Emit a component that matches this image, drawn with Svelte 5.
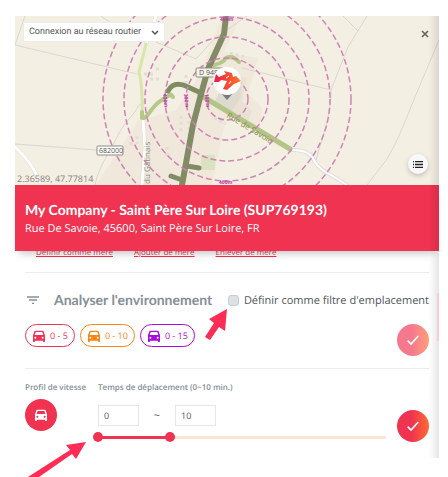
<script lang="ts">
	interface Chip {
		label: string;
		tone: string;
	}

	const chips: Chip[] = [
		{ label: '0 - 5', tone: 'red' },
		{ label: '0 - 10', tone: 'orange' },
		{ label: '0 - 15', tone: 'purple' }
	];

	const links = ['Définir comme mère', 'Ajouter de mère', 'Enlever de mère'];
	const rings = [21, 41, 62, 82, 103, 124];
	const maxTime = 40;

	let from = $state(0);
	let to = $state(10);
	let asFilter = $state(false);
</script>

{#snippet car()}
	<svg class="car" viewBox="0 0 24 24" aria-hidden="true">
		<path d="M18.9 5c-.2-.6-.8-1-1.4-1h-11c-.7 0-1.200.4-1.400 1L3 11v9c0 .6.4 1 1 1h1c.6 0 1-.4 1-1v-1h12v1c0 .6.4 1 1 1h1c.6 0 1-.4 1-1v-9l-2.100-6zM6.500 16a1.500 1.500 0 1 1 0-3 1.500 1.500 0 0 1 0 3zm11 0a1.500 1.500 0 1 1 0-3 1.500 1.500 0 0 1 0 3zM5.500 10.500l1.500-4.500h10l1.500 4.500H5.500z" />
	</svg>
{/snippet}

{#snippet check()}
	<svg width="16" height="16" viewBox="0 0 24 24" aria-hidden="true">
		<path d="M4 13l5 5L20 6" fill="none" stroke="#fff" stroke-width="2.500" />
	</svg>
{/snippet}

<main class="page">
	<div class="panel">
		<section class="map">
			<svg class="map-canvas" viewBox="15 16 424 169" preserveAspectRatio="xMidYMid slice" role="img" aria-label="Carte">
				<rect x="-200" y="16" width="900" height="169" fill="#f4efe3" />
				<path d="M200 75L222 16H241L224 52L258 58L248 94L262 108L260 128L226 116L212 185H96L118 152L138 121L176 110Z" fill="#efe8db" />
				<path d="M225 72l22 6l-5 23l10 10l-5 12l-30-16z" fill="#e8e1d4" />
				<path d="M226 78l15 5v14l-9 14l-18-8z" fill="#dedad0" />
				<path d="M201 155h14v15h-14z" fill="#dbe2c0" />
				<g fill="none" stroke="#d9d7cf">
					<path d="M25 16L15 45L137 74M101 16l10 7l85 36L215 38L247 16M15 144l82 6M95 185c4-20 15-32 24-52c8-14 17-20 19-27M138 106l8-6" />
					<path d="M242 68l89 22L348 47L367 16M343 16l15 15M331 90c0 25-8 45-15 70M439 40L415 97c-10 25-18 45-28 62L367 185" />
				</g>
				<g fill="none" stroke="#e3ded4" stroke-width="3">
					<path d="M144 74h10M156 69h5M150 79h12M167 147v10M137 136v8M132 143l-6 4M181 116v16M189 121v18M230 53l14 4M202 65v12M186 75v12M214 118l12 6" stroke-dasharray="3 3" />
				</g>
				<g fill="none" stroke-linecap="round">
					<path d="M15 147q17 15 25 35M156 16L146 44M143 118l2 30l-3 37" stroke="#dfddd7" stroke-width="4" />
					<path d="M15 147q17 15 25 35M156 16L146 44M143 118l2 30l-3 37" stroke="#fff" stroke-width="3" />
					<path d="M292 150c13 0 19 3 23 12q5 8 16 13l16 10" stroke="#dddcd9" stroke-width="4" />
					<path d="M292 150c13 0 19 3 23 12q5 8 16 13l16 10" stroke="#fff" stroke-width="2" />
					<path d="M146 44L139 72Q143 88 142 118" stroke="#d8e6aa" stroke-width="3" />
					<path d="M142 112v6c5 2 10-13 20-18q10-7 9-5l2 2" stroke="#b4c887" stroke-width="4" />
					<path d="M214 65q9-2 12-7q7-3 13 4" stroke="#b4c887" stroke-width="4" />
					<path d="M200 95L290 149" stroke="#b4c487" stroke-width="5" />
					<path d="M168 91q6-11 20-4L201 93" stroke="#7f8c60" stroke-width="5" />
					<path d="M226 16L224 34L208 69L200 98L193 125L182 185" stroke="#818c66" stroke-width="6" />
					<path d="M187 166l12 2M171 176l11 4" stroke="#818c66" stroke-width="5" />
				</g>
				<g fill="none" stroke="#cf82b5" stroke-width="1.500" stroke-dasharray="6 3">
					{#each rings as r}
						<circle cx="227" cy="99" {r} />
					{/each}
				</g>
				<g class="map-text">
					<rect x="196" y="68" width="27" height="9" rx="1" fill="#f6f2e8" stroke="#8c8c80" />
					<text x="199" y="75">D 948</text>
					<rect x="97" y="146" width="26" height="9" rx="1" fill="#fff" stroke="#8c8c80" />
					<text x="99" y="153">682000</text>
					<text class="street" transform="translate(226 117) rotate(31)">Rue de Savoie</text>
					<text class="street grey" transform="translate(150 184) rotate(-90)">du Gâtinais</text>
					<text class="distance" transform="translate(163 94) rotate(84)">400m</text>
					<text class="distance" transform="translate(184 94) rotate(84)">300m</text>
					<text class="distance" transform="translate(205 94) rotate(84)">100m</text>
					<text class="distance" x="219" y="184">400m</text>
					<text class="distance" x="220" y="21">400m</text>
				</g>
				<path d="M220 92h14l-7 8z" fill="#777c7b" />
				<circle cx="227" cy="81" r="14" fill="#fff" />
				<defs>
					<linearGradient id="brand"><stop offset="0" stop-color="#ef174f" /><stop offset="1" stop-color="#ff7920" /></linearGradient>
				</defs>
				<path d="M214 82l2-8l3 3l7-3l-2-3l8 2l1 4l3-1l5 5l-7 3l-7 6l-4-1l4-8l-6-1l-2 2z" fill="url(#brand)" />
				<path d="M229 76l-3 2M231 81l-2 3" stroke="#fff" />
			</svg>
			<select class="network" aria-label="Réseau">
				<option>Connexion au réseau routier</option>
			</select>
			<svg class="chevron" width="8" height="6" viewBox="0 0 8 6" aria-hidden="true"><path d="M1 1l3 3l3-3" fill="none" stroke="#555" stroke-width="1.500" /></svg>
			<button class="close" aria-label="Fermer">
				<svg width="8" height="8" viewBox="0 0 8 8"><path d="M1 1l6 6M7 1L1 7" stroke="#66665f" stroke-width="1.700" /></svg>
			</button>
			<button class="list" aria-label="Liste">
				<svg width="10" height="7" viewBox="0 0 10 7"><path d="M0 .5h1M0 3.500h1M0 6.500h1M2 .5h8M2 3.500h8M2 6.500h8" stroke="#222" stroke-width="1.400" /></svg>
			</button>
			<span class="coords">2.36589, 47.77814</span>
		</section>

		<header class="company">
			<h1>My Company - Saint Père Sur Loire (SUP769193)</h1>
			<p>Rue De Savoie, 45600, Saint Père Sur Loire, FR</p>
		</header>

		<div class="content">
			<nav class="links">
				{#each links as link}
					<a href="#top">{link}</a>
				{/each}
			</nav>

			<section class="analyse">
				<div class="analyse-head">
					<svg width="12" height="8" viewBox="0 0 12 8" aria-hidden="true"><path d="M0 1h12M2 4h8M5 7.500h2" stroke="#858e97" stroke-width="1.300" /></svg>
					<h2>Analyser l'environnement</h2>
					<label class="filter">
						<input type="checkbox" bind:checked={asFilter} />
						Définir comme filtre d'emplacement
					</label>
				</div>
				<div class="chip-row">
					{#each chips as chip}
						<button class="chip {chip.tone}">
							{@render car()}
							{chip.label}
						</button>
					{/each}
					<button class="round confirm faded" aria-label="Valider l'analyse">{@render check()}</button>
				</div>
			</section>

			<section class="travel">
				<div class="profile">
					<span class="caption">Profil de vitesse</span>
					<button class="round" aria-label="Voiture">{@render car()}</button>
				</div>
				<div class="time">
					<span class="caption">Temps de déplacement (0~10 min.)</span>
					<div class="bounds">
						<input type="text" aria-label="Temps minimum" bind:value={from} />
						<span>~</span>
						<input type="text" aria-label="Temps maximum" bind:value={to} />
					</div>
					<div class="slider">
						<div class="track">
							<div class="fill" style="margin-left: {(from / maxTime) * 100}%; width: {((to - from) / maxTime) * 100}%"></div>
						</div>
						<input type="range" min="0" max={maxTime} aria-label="Minimum" bind:value={from} />
						<input type="range" min="0" max={maxTime} aria-label="Maximum" bind:value={to} />
					</div>
				</div>
				<button class="round confirm" aria-label="Valider le temps">{@render check()}</button>
			</section>
		</div>
		<div class="edge"><div class="scroll-thumb"></div></div>
	</div>

	<svg class="arrows" width="240" height="177" viewBox="0 300 240 177" aria-hidden="true">
		<path d="M227 309L209 319L214 323L205 337L210 340L219 327L225 331Z" fill="#ff2d55" />
		<path d="M86 442L66 445L70 450L28 477H39L72 454L76 459Z" fill="#ff2d55" />
	</svg>
</main>

<style>
	:global(body) {
		margin: 0;
		background: #fff;
	}

	.page {
		position: relative;
		padding: 16px 9px 19px 15px;
		overflow: hidden;
		font-family: 'Open Sans', 'Noto Sans', sans-serif;
		font-size: 11px;
		color: #50565c;
		text-rendering: geometricPrecision;
	}

	.panel {
		position: relative;
	}

	button,
	input,
	select {
		box-sizing: border-box;
		margin: 0;
		padding: 0;
		border: 0;
		font: inherit;
		color: inherit;
		text-rendering: inherit;
	}

	button {
		display: flex;
		align-items: center;
		justify-content: center;
		cursor: pointer;
	}

	.map {
		position: relative;
		height: 169px;
		overflow: hidden;
	}

	.map-canvas {
		display: block;
		width: 100%;
		height: 100%;
	}

	.map-text {
		font-size: 7px;
		fill: #555;
	}

	.street {
		font-size: 8px;
		fill: #7c8a4b;
	}

	.street.grey {
		fill: #8c8c84;
	}

	.distance {
		font-size: 5px;
		font-weight: 700;
		fill: #b0399f;
	}

	.network {
		position: absolute;
		top: 6px;
		left: 8px;
		width: 142px;
		height: 20px;
		padding: 0 5px;
		appearance: none;
		background: #fff;
		border: 1px solid #ececec;
		font-family: Roboto, sans-serif;
		font-size: 9px;
		color: #555;
	}

	.chevron {
		position: absolute;
		top: 14px;
		left: 136px;
		pointer-events: none;
	}

	.close {
		position: absolute;
		top: 14px;
		right: 10px;
		background: none;
	}

	.list {
		position: absolute;
		right: 11px;
		bottom: 11px;
		width: 20px;
		height: 20px;
		border-radius: 50%;
		background: #f8f8fa;
		box-shadow: 0 2px 5px rgba(0, 0, 0, 0.2);
	}

	.coords {
		position: absolute;
		left: 2px;
		bottom: 0;
		line-height: 13px;
		font-size: 9px;
		color: #858581;
	}

	.company {
		position: relative;
		box-sizing: border-box;
		height: 66px;
		padding: 16px 10px 0;
		background: #ef3351;
		color: #fff;
		box-shadow: 0 6px 8px -4px rgba(0, 0, 0, 0.25);
	}

	h1 {
		margin: 0;
		font: 700 14px/18px Lato, sans-serif;
	}

	.company p {
		margin: 0;
		line-height: 19px;
	}

	.content {
		padding: 0 10px;
	}

	.links {
		display: flex;
		align-items: flex-end;
		gap: 21px;
		height: 6px;
		padding-left: 11px;
		margin-bottom: 15px;
		overflow: hidden;
	}

	.links a {
		font-size: 8px;
		line-height: 9px;
		color: #ef3351;
		text-decoration: underline;
	}

	.analyse {
		box-sizing: border-box;
		height: 96px;
		padding-top: 17px;
		border-top: 1px solid #ececee;
	}

	.analyse-head {
		display: flex;
		align-items: center;
		height: 20px;
		padding-left: 2px;
	}

	h2 {
		margin: 0 0 0 15px;
		font: 700 14px/20px Lato, sans-serif;
		color: #858e97;
	}

	.filter {
		display: flex;
		align-items: center;
		gap: 5px;
		margin-left: auto;
		white-space: nowrap;
	}

	.filter input {
		width: 11px;
		height: 11px;
		appearance: none;
		background: #dde1e5;
		border: 1px solid #c9ced3;
		border-radius: 3px;
	}

	.chip-row {
		display: flex;
		align-items: flex-start;
		gap: 5px;
		margin-top: 14px;
	}

	.chip {
		height: 23px;
		padding: 0 6px 0 5px;
		gap: 3px;
		border: 1px solid;
		border-radius: 12px;
		background: #fff;
		font-size: 9px;
	}

	.car {
		width: 16px;
		height: 16px;
		fill: currentColor;
	}

	.red {
		color: #ef3358;
	}

	.orange {
		color: #fa8414;
	}

	.purple {
		color: #aa0bdc;
	}

	.round {
		width: 32px;
		height: 32px;
		flex: none;
		border-radius: 50%;
		background: #ef3351;
		color: #fff;
	}

	.confirm {
		margin-left: auto;
		background: linear-gradient(90deg, #ef3351 45%, #ff6b32);
	}

	.faded {
		opacity: 0.65;
	}

	.travel {
		display: flex;
		padding: 12px 0 16px;
		border-top: 1px solid #ececee;
	}

	.caption {
		display: block;
		line-height: 14px;
		font-size: 8px;
		font-weight: 600;
		color: #858e97;
		white-space: nowrap;
	}

	.profile {
		width: 73px;
	}

	.profile .round {
		margin-top: 4px;
	}

	.time {
		flex: 1;
		margin-right: 11px;
	}

	.bounds {
		display: flex;
		align-items: center;
		margin-top: 10px;
	}

	.bounds input {
		width: 41px;
		height: 21px;
		padding: 0 5px;
		border: 1px solid #e6e6e8;
		font-size: 9px;
	}

	.bounds span {
		width: 36px;
		text-align: center;
	}

	.slider {
		position: relative;
		height: 10px;
		margin-top: 6px;
	}

	.track {
		padding-top: 4px;
	}

	.track::before {
		content: '';
		display: block;
		height: 3px;
		background: #ffe3d3;
	}

	.fill {
		position: relative;
		top: -3px;
		height: 3px;
		background: #ef3351;
	}

	.slider input {
		position: absolute;
		top: 0;
		left: -5px;
		width: calc(100% + 10px);
		height: 10px;
		appearance: none;
		background: none;
		pointer-events: none;
	}

	.slider input::-webkit-slider-thumb {
		width: 10px;
		height: 10px;
		appearance: none;
		border-radius: 50%;
		background: #ef3351;
		pointer-events: auto;
	}

	.travel .confirm {
		margin-top: 29px;
	}

	.edge {
		position: absolute;
		top: 0;
		right: 0;
		bottom: 0;
		width: 10px;
		background: linear-gradient(90deg, transparent, rgba(0, 0, 0, 0.1));
		pointer-events: none;
	}

	.scroll-thumb {
		width: 2px;
		height: 48px;
		margin: 277px 0 0 auto;
		background: #fbcbd5;
	}

	.arrows {
		position: absolute;
		top: 300px;
		left: 0;
		pointer-events: none;
	}
</style>
